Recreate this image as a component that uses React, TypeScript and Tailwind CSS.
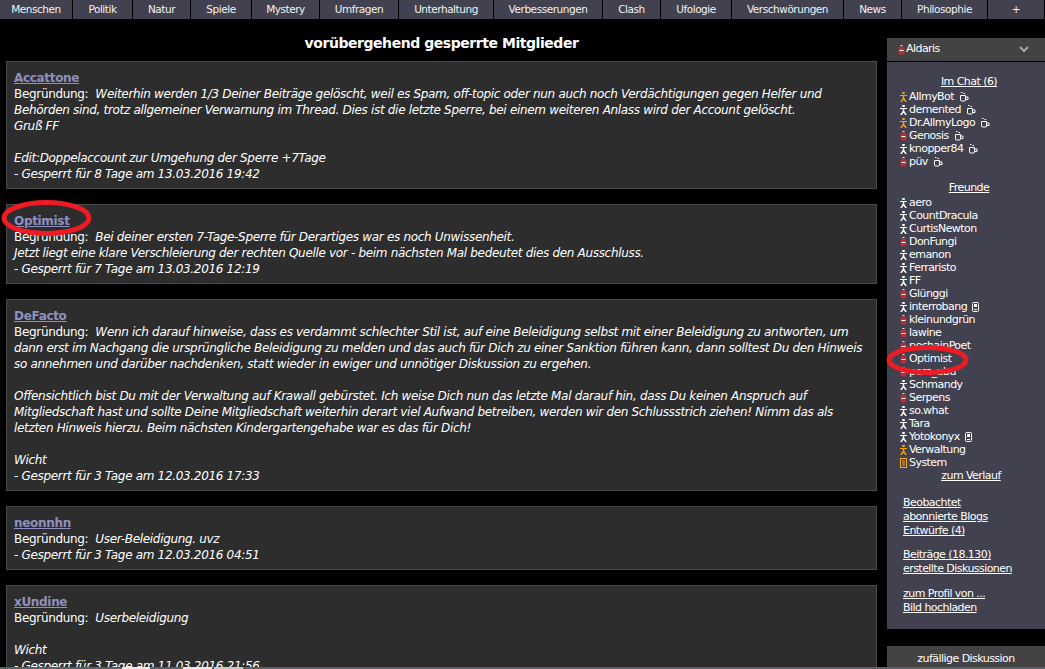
import React from "react";

const nav: [string, number][] = [
  ["Menschen", 73], ["Politik", 60], ["Natur", 58], ["Spiele", 61], ["Mystery", 68], ["Umfragen", 79],
  ["Unterhaltung", 95], ["Verbesserungen", 109], ["Clash", 58], ["Ufologie", 71], ["Verschwörungen", 112],
  ["News", 58], ["Philosophie", 86], ["+", 57],
];

type Kind = "w" | "o" | "r" | "s";
const chat: [string, Kind, string?][] = [
  ["AllmyBot", "o", "c"], ["demented", "w", "c"], ["Dr.AllmyLogo", "o", "c"], ["Genosis", "r", "c"], ["knopper84", "w", "c"], ["püv", "r", "c"],
];
const friends: [string, Kind, string?][] = [
  ["aero", "w"], ["CountDracula", "w"], ["CurtisNewton", "w"], ["DonFungi", "r"], ["emanon", "w"], ["Ferraristo", "w"], ["FF", "w"], ["Glünggi", "r"],
  ["interrobang", "w", "m"], ["kleinundgrün", "r"], ["lawine", "r"], ["nochainPoet", "r"], ["Optimist", "r"], ["pere_ubu", "r"], ["Schmandy", "w"],
  ["Serpens", "r"], ["so.what", "w"], ["Tara", "w"], ["Yotokonyx", "w", "m"], ["Verwaltung", "o"], ["System", "s"],
];

function Person({ color }: { color: string }) {
  return (
    <svg width="7" height="10" viewBox="0 0 7 10" className="shrink-0">
      <rect x="2" y="0" width="3" height="2" rx="1" fill={color} />
      <rect x="0" y="3" width="7" height="1" fill={color} />
      <rect x="2.75" y="3" width="1.5" height="4" fill={color} />
      <path d="M3.5 6.5L0.8 10M3.5 6.5L6.2 10" stroke={color} strokeWidth="1.4" fill="none" />
    </svg>
  );
}
function Blocked() {
  return (
    <svg width="7" height="10" viewBox="0 0 7 10" className="shrink-0">
      <rect x="2.5" y="0" width="2" height="1" fill="#e8e8e8" />
      <rect x="0.5" y="1.5" width="6" height="8" rx="2" fill="#b3303a" />
      <rect x="1.5" y="5" width="4" height="1" fill="#ffffff" />
    </svg>
  );
}
function Sys() {
  return (
    <svg width="7" height="10" viewBox="0 0 7 10" className="shrink-0">
      <rect x="0.5" y="0.5" width="6" height="9" fill="none" stroke="#f5a623" />
      <path d="M2 3h3M2 5h3M2 7h3" stroke="#f5a623" />
    </svg>
  );
}
function StatusIcon({ k }: { k: Kind }) {
  if (k === "r") return <Blocked />;
  if (k === "s") return <Sys />;
  return <Person color={k === "o" ? "#f5a010" : "#ffffff"} />;
}
function Cup() {
  return (
    <svg width="10" height="10" viewBox="0 0 10 10" className="ml-[5px] shrink-0">
      <path d="M2 0.5h1.5M4.5 1.5h1.5" stroke="#fff" strokeWidth="1" />
      <path d="M1.5 3.5h5v4.5a1 1 0 0 1-1 1h-3a1 1 0 0 1-1-1zM6.5 5h2.5v2.5H6.5" stroke="#fff" strokeWidth="1" fill="none" />
    </svg>
  );
}
function Mobile() {
  return (
    <svg width="7" height="10" viewBox="0 0 7 10" className="ml-[5px] shrink-0">
      <rect x="0.5" y="0.5" width="6" height="9" rx="1" fill="none" stroke="#fff" />
      <rect x="2" y="2" width="3" height="3" fill="#fff" />
      <path d="M2 7.5h3" stroke="#fff" />
    </svg>
  );
}

function UserRow({ name, k, extra }: { name: string; k: Kind; extra?: string }) {
  return (
    <div className="flex h-[13px] items-center">
      <span className="flex w-[9px] justify-start pl-[1px]"><StatusIcon k={k} /></span>
      <span className="ml-[1px]">{name}</span>
      {extra === "c" && <Cup />}
      {extra === "m" && <Mobile />}
    </div>
  );
}

function Card({ name, children, reason }: { name: string; reason: React.ReactNode; children: React.ReactNode }) {
  return (
    <section className="mb-[15px] border border-[#4a4a4a] bg-[#2d2d2d] px-[7px] pt-[8px] pb-[6px] text-white">
      <a className="block text-[12px] leading-[16px] font-bold text-[#9090c0] underline">{name}</a>
      <div className="leading-[16px]">Begründung:&nbsp; <i>{reason}</i></div>
      <div className="leading-[16px] italic">{children}</div>
    </section>
  );
}

function Ring({ className, w, h }: { className: string; w: number; h: number }) {
  return (
    <svg width={w} height={h} viewBox={`0 0 ${w} ${h}`} className={className}>
      <ellipse cx={w / 2} cy={h / 2} rx={w / 2 - 3} ry={h / 2 - 2.5} fill="none" stroke="#ed1c24" strokeWidth="5" />
    </svg>
  );
}

export default function App() {
  const font = "[font-family:'DejaVu_Sans','Liberation_Sans',sans-serif]";
  return (
    <div className={`relative h-[669px] w-[1045px] overflow-hidden bg-black text-[12px] tracking-[-0.32px] text-white ${font}`}>
      <nav className="flex h-[19px] bg-[#41414f]">
        {nav.map(([t, w]) => (
          <div key={t} style={{ width: w }} className="flex shrink-0 items-center justify-center border-r border-black pb-[2px] text-[10.5px] leading-[14px] tracking-[-0.45px] text-[#f2f2f2]">
            {t}
          </div>
        ))}
      </nav>
      <div className="flex">
        <main className="ml-[6px] w-[871px] shrink-0">
          <h1 className="mt-[15px] mb-[9px] text-center text-[14px] leading-[18px] font-bold tracking-[-0.45px]">vorübergehend gesperrte Mitglieder</h1>
          <Card name="Accattone" reason="Weiterhin werden 1/3 Deiner Beiträge gelöscht, weil es Spam, off-topic oder nun auch noch Verdächtigungen gegen Helfer und">
            Behörden sind, trotz allgemeiner Verwarnung im Thread. Dies ist die letzte Sperre, bei einem weiteren Anlass wird der Account gelöscht.<br />
            Gruß FF<br /><br />
            Edit:Doppelaccount zur Umgehung der Sperre +7Tage<br />
            - Gesperrt für 8 Tage am 13.03.2016 19:42
          </Card>
          <Card name="Optimist" reason="Bei deiner ersten 7-Tage-Sperre für Derartiges war es noch Unwissenheit.">
            Jetzt liegt eine klare Verschleierung der rechten Quelle vor - beim nächsten Mal bedeutet dies den Ausschluss.<br />
            - Gesperrt für 7 Tage am 13.03.2016 12:19
          </Card>
          <Card name="DeFacto" reason="Wenn ich darauf hinweise, dass es verdammt schlechter Stil ist, auf eine Beleidigung selbst mit einer Beleidigung zu antworten, um">
            dann erst im Nachgang die ursprüngliche Beleidigung zu melden und das auch für Dich zu einer Sanktion führen kann, dann solltest Du den Hinweis<br />
            so annehmen und darüber nachdenken, statt wieder in ewiger und unnötiger Diskussion zu ergehen.<br /><br />
            Offensichtlich bist Du mit der Verwaltung auf Krawall gebürstet. Ich weise Dich nun das letzte Mal darauf hin, dass Du keinen Anspruch auf<br />
            Mitgliedschaft hast und sollte Deine Mitgliedschaft weiterhin derart viel Aufwand betreiben, werden wir den Schlussstrich ziehen! Nimm das als<br />
            letzten Hinweis hierzu. Beim nächsten Kindergartengehabe war es das für Dich!<br /><br />
            Wicht<br />
            - Gesperrt für 3 Tage am 12.03.2016 17:33
          </Card>
          <Card name="neonnhn" reason="User-Beleidigung. uvz">- Gesperrt für 3 Tage am 12.03.2016 04:51</Card>
          <Card name="xUndine" reason="Userbeleidigung">
            <br />Wicht<br />- Gesperrt für 3 Tage am 11.03.2016 21:56
          </Card>
        </main>
        <aside className="mt-[19px] ml-[10px] w-[158px] shrink-0 text-[11px] tracking-[-0.55px]">
          <div className="flex h-[24px] items-center justify-between border-b border-black bg-[#434343] pr-[16px] pl-[11px]">
            <span className="flex items-center gap-[1px]"><Blocked />Aldaris</span>
            <svg width="10" height="7" viewBox="0 0 10 7"><path d="M1 1l4 4 4-4" stroke="#a6a6b8" strokeWidth="2" fill="none" /></svg>
          </div>
          <div className="h-[567px] bg-[#41414f] pt-[13px] pl-[12px] leading-[13px]">
            <div className="pr-[6px] text-center underline">Im Chat (6)</div>
            <div className="mt-[2px]">
              {chat.map(([n, k, e]) => <UserRow key={n} name={n} k={k} extra={e} />)}
            </div>
            <div className="mt-[13px] mb-[1px] pr-[6px] text-center underline">Freunde</div>
            <div className="mt-[2px]">
              {friends.map(([n, k, e]) => <UserRow key={n} name={n} k={k} extra={e} />)}
            </div>
            <div className="pr-[2px] text-center underline">zum Verlauf</div>
            <div className="mt-[14px] pl-[4px] leading-[14px] underline">
              <div>Beobachtet</div>
              <div>abonnierte Blogs</div>
              <div>Entwürfe (4)</div>
              <div className="mt-[10px]">Beiträge (18.130)</div>
              <div>erstellte Diskussionen</div>
              <div className="mt-[11px]">zum Profil von ...</div>
              <div>Bild hochladen</div>
            </div>
          </div>
          <div className="mt-[17px] flex h-[24px] justify-center bg-[#434343] pt-[5px]">zufällige Diskussion</div>
        </aside>
      </div>
      <Ring className="absolute top-[200px] left-[1px]" w={91} h={36} />
      <Ring className="absolute top-[345px] left-[886px]" w={83} h={30} />
      <div className="absolute bottom-0 left-0 flex h-[2px] w-full bg-[#5a6068]">
        <div className="ml-[122px] w-[28px] bg-[#e8e8e8]" />
        <div className="ml-[33px] w-[29px] bg-[#e8e8e8]" />
        <div className="ml-[2px] w-[29px] bg-[#c8c8c8]" />
      </div>
    </div>
  );
}
